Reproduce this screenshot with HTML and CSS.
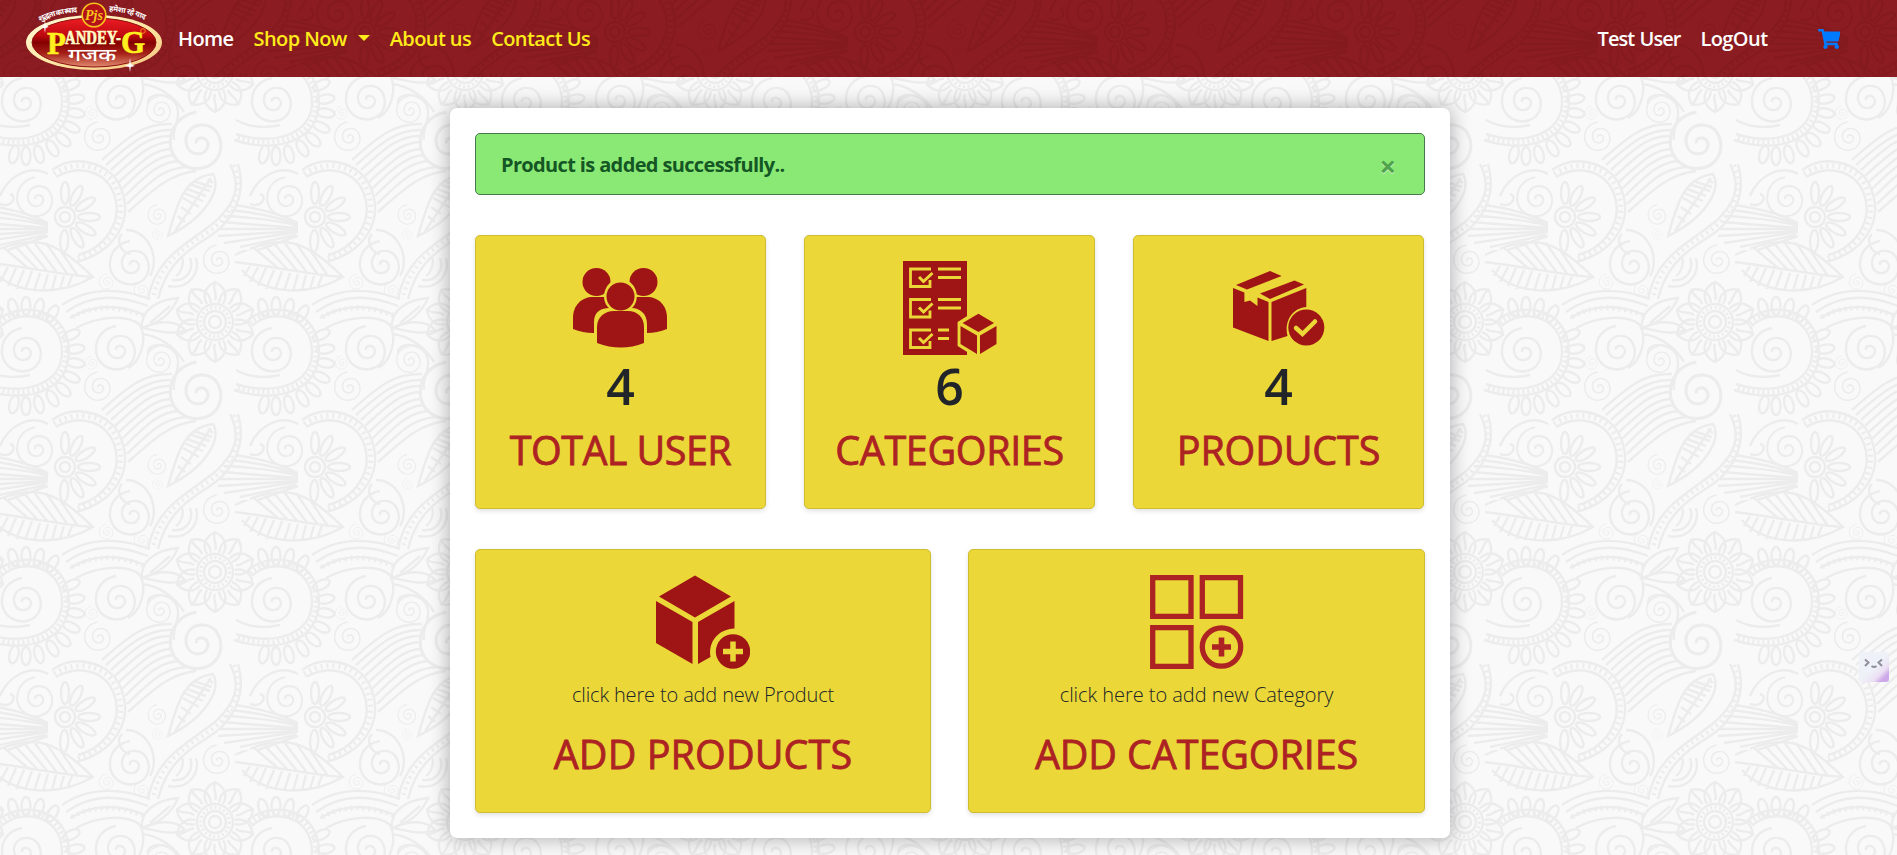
FILE: index.html
```
<!DOCTYPE html>
<html lang="en">
<head>
<meta charset="utf-8">
<title>Admin Dashboard</title>
<link rel="stylesheet" href="styles.css">
</head>
<body>
<svg class="paisley" aria-hidden="true">
  <defs>
    <path id="curl" d="M-2 1C-3-3 3-5 6-1C9 4 4 10-2 9C-10 8-12-2-8-8C-3-15 9-15 14-7C20 3 16 15 6 19C-8 24-20 15-22 3C-23-12-14-21-2-23"/>
    <g id="bloom">
      <g id="petals"><path id="petal" d="M-8-18C-14-28-8-36 0-40C8-36 14-28 8-18M0-40C-3-32 3-28 0-22"/><use href="#petal" transform="rotate(36)"/><use href="#petal" transform="rotate(72)"/><use href="#petal" transform="rotate(108)"/><use href="#petal" transform="rotate(144)"/></g>
      <use href="#petals" transform="rotate(180)"/>
      <circle r="6"/><circle r="11"/><circle r="18"/><circle r="14.500" stroke-width="3" stroke-dasharray="2 2.500"/>
    </g>
    <ellipse id="leaf" cy="-50" rx="4.500" ry="9"/>
    <g id="shapes" fill="none" stroke-width="2.400">
      <use href="#curl" transform="translate(24 101)"/>
      <path d="M2 76C20 58 62 64 62 102C62 134 25 146-14 134M-2 70C22 50 69 58 69 102C69 142 25 154-16 140M-14 120C0 128 16 128 30 125"/>
      <path d="M0 73C21 54 66 61 66 102C66 138 25 150-15 137" stroke-width="5" stroke-dasharray="2 3"/>
      <g transform="translate(26 106)"><use href="#leaf" transform="rotate(-15)"/><use href="#leaf" transform="rotate(0)"/><use href="#leaf" transform="rotate(15)"/><use href="#leaf" transform="rotate(32)"/><use href="#leaf" transform="rotate(65)"/><use href="#leaf" transform="rotate(82)"/><use href="#leaf" transform="rotate(98)"/><use href="#leaf" transform="rotate(115)"/><use href="#leaf" transform="rotate(132)"/><use href="#leaf" transform="rotate(148)"/><use href="#leaf" transform="rotate(165)"/><use href="#leaf" transform="rotate(180)"/><use href="#leaf" transform="rotate(194)"/></g>
      <use href="#curl" transform="translate(118 99)"/>
      <use href="#curl" transform="translate(199 142) scale(1.300)"/>
      <use href="#curl" transform="translate(160 110) scale(.6)"/>
      <path d="M148 104C146 90 178 92 178 112C179 122 172 130 174 140M142 84C160 86 176 98 184 112"/>
      <use href="#curl" transform="translate(99 137) scale(.65)"/>
      <use href="#curl" transform="translate(37 198) scale(.9)"/><path d="M0 196C8 176 30 164 48 174M0 204C12 208 18 196 10 194"/>
      <use href="#curl" transform="translate(132 14)"/><path d="M126-20C150-20 160 10 150 26M122-16C116-10 120 2 130 4"/>
      <use href="#curl" transform="translate(218 10) scale(.65)"/>
      <use href="#curl" transform="translate(158 215) scale(.45)"/><use href="#curl" transform="translate(158 234) scale(.25)"/>
      <use href="#curl" transform="translate(107 32) scale(.35)"/><use href="#curl" transform="translate(142 40) scale(.35)"/><use href="#curl" transform="translate(92 113) scale(.3)"/>
      <path d="M52 170C76 153 110 163 120 186C135 220 115 252 76 262M56 177C80 163 106 172 114 194C124 222 104 248 78 255"/>
      <path d="M54 174C80 157 110 168 117 190C129 220 110 248 77 259" stroke-width="5" stroke-dasharray="2 4"/>
      <g transform="translate(65 217)"><circle r="5"/><circle r="10"/><ellipse cy="-24" rx="4" ry="11"/><ellipse cy="-24" rx="4" ry="11" transform="rotate(28)"/><ellipse cy="-24" rx="4" ry="11" transform="rotate(58)"/><ellipse cy="-24" rx="4" ry="11" transform="rotate(90)"/><ellipse cy="-24" rx="4" ry="11" transform="rotate(120)"/><ellipse cy="-24" rx="4" ry="11" transform="rotate(150)"/><ellipse cy="-24" rx="4" ry="11" transform="rotate(182)"/></g>
      <path d="M-15 205Q25 211 48 223M-19 210Q25 215 48 225M-24 216Q25 219 48 226M-28 222L48 228M-30 229L48 229M-32 236L48 231M-26 243L48 232M-10 247L46 235M8 250L48 236"/>
      <path d="M102 160C130 135 145 123 172 124M106 165C132 142 148 129 172 130M111 170C136 147 150 135 171 136M115 176C140 153 153 142 171 142M119 182C143 160 155 149 172 149M122 189C145 166 158 156 174 155M125 196C150 171 161 162 179 161M127 204C153 179 163 169 186 167M128 212C155 188 170 174 196 171"/>
      <path d="M168 236C177 205 183 178 213 174C222 190 205 218 168 236ZM175 231L211 178M181 207L191 214M183 198L199 207M187 189L206 196M193 181L212 187M178 216L185 222M189 184L210 191M184 193L203 201M208 179L213 183"/>
      <path d="M230 164C242 188 234 204 216 221C190 243 156 255 148 299M238 164C248 198 230 224 207 238C179 255 165 271 158 299"/>
      <path d="M234 165C247 195 225 222 204 235C176 252 158 270 153 299" stroke-width="4" stroke-dasharray="2 4"/>
      <path d="M-15 5C35-18 55-10 93 27C60 46 15 46-8 20M-15 12C35 18 60 25 93 27M0 16L-6 26M8 17L0 32M16 18L8 36M24 20L16 39M32 21L25 40M40 23L34 41M48 24L43 41M56 25L52 40M64 26L60 39M72 26L68 36M4-2L28 18M14-5L38 20M24-7L48 22M34-8L58 24M46-7L68 25M60 0L78 26"/>
      <path d="M176 26C182 22 184 12 182 8M172 30C188 32 194 18 190 8M168 36C190 40 200 22 196 8"/>
      <path d="M62 55C90 36 120 38 150 49M66 62C94 42 122 46 148 56M70 68C95 53 120 55 142 64M76 78C98 66 128 64 140 75C148 90 140 112 128 118"/>
      <path d="M72 67C96 54 120 56 145 66" stroke-width="5" stroke-dasharray="2 4"/>
      <use href="#bloom" transform="translate(215 72)"/>
      <path d="M142 78C140 62 155 50 178 48C172 62 160 73 142 78C157 80 170 86 185 80C176 70 160 70 142 78M150 73L170 56"/>
    </g>
    <g id="repeat"><use href="#shapes"/><use href="#shapes" x="250"/><use href="#shapes" x="-250"/><use href="#shapes" y="250"/><use href="#shapes" y="-250"/></g>
    <pattern id="tile" width="250" height="250" patternUnits="userSpaceOnUse"><use href="#repeat" stroke="#ececec"/></pattern>
    <pattern id="tileRed" width="250" height="250" patternUnits="userSpaceOnUse" patternTransform="translate(50 65)"><use href="#repeat" stroke="#84191e"/></pattern>
  </defs>
  <rect width="100%" height="100%" fill="#f9f9f9"/>
  <rect width="100%" height="100%" fill="url(#tile)"/>
  <rect width="100%" height="77" fill="#8b1c21"/>
  <rect width="100%" height="77" fill="url(#tileRed)"/>
</svg>

<nav class="navbar">
  <a class="brand">
    <svg width="138" height="72" viewBox="0 0 138 72" role="img" aria-label="Pandey-G">
      <defs>
        <linearGradient id="oval" x1="0" y1="0" x2="0" y2="1"><stop offset="0" stop-color="#ee1c24"/><stop offset=".35" stop-color="#c00a10"/><stop offset=".5" stop-color="#850000"/><stop offset=".72" stop-color="#a52018"/><stop offset="1" stop-color="#e08a70"/></linearGradient>
        <linearGradient id="rim" x1="0" y1="0" x2="1" y2="1"><stop offset="0" stop-color="#fff9d8"/><stop offset=".5" stop-color="#ffe9a8"/><stop offset="1" stop-color="#f3c27c"/></linearGradient>
        <path id="arcL" d="M14 22Q32 13 55 12"/><path id="arcR" d="M84 11Q104 12 123 21"/>
      </defs>
      <ellipse cx="69" cy="42.500" rx="68" ry="27.500" fill="url(#rim)"/>
      <ellipse cx="69" cy="42.500" rx="62" ry="24.500" fill="url(#oval)" stroke="#8c1010"/>
      <text class="logo-tag"><textPath href="#arcL" textLength="39">शुद्धता का स्वाद</textPath></text>
      <text class="logo-tag"><textPath href="#arcR" textLength="37">हमेशा रहे याद</textPath></text>
      <circle cx="69" cy="15" r="11.800" fill="#b3121a" stroke="#f8c51c" stroke-width="1.600"/>
      <text x="69" y="20" class="logo-mono">Pjs</text>
      <text class="logo-word"><tspan x="22" y="53.500" class="logo-cap">P</tspan><tspan x="40" y="44" textLength="56" lengthAdjust="spacingAndGlyphs">ANDEY-</tspan><tspan x="96" y="53" class="logo-cap">G</tspan></text>
      <circle cx="118" cy="31" r="2.300" fill="none" stroke="#f08a1c"/>
      <text x="43" y="61" class="logo-hindi" textLength="48" lengthAdjust="spacingAndGlyphs">गजक</text>
      <path d="M20 21l.7 4 3 2-3 1-.7 5-.8-5-3-1 3-2zM105 58l.8 6 4 2-4 1-.8 5-.8-5-4-1 4-2z" fill="#fff"/>
    </svg>
  </a>
  <a class="nav-link nav-light">Home</a>
  <a class="nav-link">Shop Now<span class="caret"></span></a>
  <a class="nav-link">About us</a>
  <a class="nav-link">Contact Us</a>
  <div class="nav-right">
    <a class="nav-link nav-light t-user">Test User</a>
    <a class="nav-link nav-light">LogOut</a>
    <svg class="cart" viewBox="0 0 576 512" width="22.500" height="20" aria-label="Cart"><path fill="#007bff" d="M528.120 301.319l47.273-208C578.806 78.301 567.391 64 551.990 64H159.208l-9.166-44.810C147.758 8.021 137.930 0 126.529 0H24C10.745 0 0 10.745 0 24v16c0 13.255 10.745 24 24 24h69.883l70.248 343.435C147.325 417.100 136 435.222 136 456c0 30.928 25.072 56 56 56s56-25.072 56-56c0-15.674-6.447-29.835-16.824-40h209.647C430.447 426.165 424 440.326 424 456c0 30.928 25.072 56 56 56s56-25.072 56-56c0-22.172-12.888-41.332-31.579-50.405l5.517-24.276c3.413-15.018-8.002-29.319-23.403-29.319H218.117l-6.545-32h293.145c11.206 0 20.920-7.754 23.403-18.681z"/></svg>
  </div>
</nav>

<main class="panel">
  <div class="alert"><strong>Product is added successfully..</strong><span class="close">×</span></div>
  <section class="row row-3">
    <article class="card">
      <svg class="icon" viewBox="0 0 94 94" fill="#9f1515">
        <circle cx="23.500" cy="21" r="14"/><circle cx="70.500" cy="21" r="14"/>
        <path d="M0 68V57C0 44 9 36 20 36H74C85 36 94 44 94 57V68Q84 72 74 72H20Q10 72 0 68Z"/>
        <path class="cut" d="M21 74V61C21 50 29 47 36 47C26 38 32 18 47.500 18S69 38 59 47C66 47 74 52 74 63V74Z"/>
        <circle cx="47.500" cy="35.500" r="14"/>
        <path d="M24 82V66C24 56 32 50 41 50H55C64 50 71 56 71 66V82Q48 91 24 82Z"/>
      </svg>
      <p class="count">4</p><h2 class="t-total">TOTAL USER</h2>
    </article>
    <article class="card">
      <svg class="icon icon-flush" viewBox="0 0 94 94">
        <path fill="#9f1515" d="M0 0H64V94H0Z"/>
        <g fill="none" stroke="#ebd737" stroke-width="2.800">
          <g id="check"><path d="M28 8H7.500V25.500H27V19M35 8H58M35 16.500H58"/><path d="M16 16L20.500 20.500 29.500 12" stroke-width="3"/></g>
          <use href="#check" y="30.500"/>
          <path d="M28 69H7.500V86.500H27V80M35 69H46M35 77.500H46"/><path d="M16 77L20.500 81.500 29.500 73" stroke-width="3"/>
        </g>
        <path class="cut" d="M75.500 48L54.600 61V85L69 94H84L94 84V61Z"/>
        <path fill="#9f1515" d="M75.500 52.700L91 62 75.500 71 59.500 62ZM57.500 65L74 74.500V93L57.500 83ZM93.500 65V83L77 93V74.500Z"/>
      </svg>
      <p class="count">6</p><h2 class="t-cat">CATEGORIES</h2>
    </article>
    <article class="card">
      <svg class="icon" viewBox="0 0 94 94" fill="#9f1515">
        <path d="M5 24L39 10 50.600 15 16 28.500ZM29 32.500L63.500 19.500 73 23.500 39 38ZM2 27L13.400 31.500V41L19 39.500 26.500 45V36.500L37.500 41V80L2 66.500ZM40.500 41L75.300 27V46C61 47 53 61 56.500 75L40.500 80Z"/>
        <circle cx="75.300" cy="66.500" r="18"/><path d="M65 67L71.500 73 84 60.500" fill="none" stroke="#ebd737" stroke-width="4.500" stroke-linecap="round"/>
      </svg>
      <p class="count">4</p><h2 class="t-prod">PRODUCTS</h2>
    </article>
  </section>
  <section class="row row-2">
    <article class="card">
      <svg class="icon" viewBox="0 0 94 94" fill="#9f1515">
        <path d="M39 .5L75 21.500 39 42.500 3 21.500ZM0 26L36.500 47V89L0 68ZM78.500 26V53.500C63 54 52 66 54.500 82L42 89V47Z"/>
        <circle cx="77" cy="76.500" r="17.200"/><path d="M67 76.500H87M77 66.500V86.500" stroke="#ebd737" stroke-width="5.500"/>
      </svg>
      <p class="hint">click here to add new Product</p><h2 class="t-addp">ADD PRODUCTS</h2>
    </article>
    <article class="card">
      <svg class="icon icon-flush" viewBox="0 0 94 94" fill="none" stroke="#ad2323" stroke-width="5.300">
        <path d="M2.700 2.700H41V41.300H2.700ZM52.300 2.700H90.500V41.300H52.300ZM2.700 52.700H41V91.300H2.700Z"/><circle cx="71.500" cy="72" r="19.200"/><path d="M62 72H81M71.500 62.500V81.500" stroke-width="5.600"/>
      </svg>
      <p class="hint t-hint-cat">click here to add new Category</p><h2 class="t-addc">ADD CATEGORIES</h2>
    </article>
  </section>
</main>

<div class="widget"><svg width="30" height="30" viewBox="0 0 30 30" fill="none" stroke="#8f8f9c" stroke-width="2"><path d="M6 7.500L9.500 10.500 6 14M23 7.500L19.500 10.500 23 14M12.500 14Q15 16 17.500 14"/></svg></div>
</body>
</html>
```
FILE: styles.css
```
* { box-sizing: border-box; }
body { margin: 0; height: 855px; overflow: hidden; color: #212529; font-family: "Open Sans", "Noto Sans", sans-serif; font-size: 20px; line-height: 30px; }
.paisley { position: absolute; inset: 0; width: 100%; height: 100%; z-index: -1; }

.navbar { display: flex; align-items: center; height: 77px; padding: 0 57px 0 25px; }
.brand { width: 145px; height: 72px; margin-top: -5px; }
.brand svg { display: block; }
.nav-link { padding: 0 8px; margin-right: 4px; color: #ffeb1a; font-weight: 640; white-space: nowrap; letter-spacing: -.58px; }
.nav-light { color: #fff; }
.t-user { letter-spacing: -.95px; word-spacing: 1px; }
.caret { display: inline-block; margin-left: 11px; vertical-align: 5px; border: 6px solid transparent; border-top-color: currentColor; border-bottom: 0; }
.nav-right { display: flex; align-items: center; margin-left: auto; }
.cart { margin-left: 38px; }
.logo-tag { font: 700 7.5px "Noto Sans", sans-serif; fill: #fff; }
.logo-mono { font: italic 700 14px "Liberation Serif", serif; fill: #f8c51c; text-anchor: middle; }
.logo-word { font: 700 19px "Liberation Serif", serif; fill: #fffdc8; stroke: #fffdc8; stroke-width: .6px; }
.logo-cap { font-size: 31px; fill: #fff01f; stroke: #fff01f; }
.logo-hindi { font: 500 18px "Noto Sans", sans-serif; fill: #fff; }

.panel { width: 1000px; height: 730px; margin: 31px 0 0 450px; padding: 25px; border-radius: 7px; background: #fff; box-shadow: 0 0 20px rgba(50, 50, 60, .4); }
.alert { display: flex; justify-content: space-between; align-items: center; height: 62px; padding: 2px 28px 0 25px; border: 1px solid #47774f; border-radius: 5px; background: #8ae975; color: #155724; }
.alert strong { font-weight: 700; letter-spacing: -.64px; }
.close { padding-top: 2px; font-size: 29px; font-weight: 700; color: #4fa34c; text-shadow: 0 1px 0 #d3f5cb; }
.row { display: grid; margin-top: 40px; }
.row-3 { grid-template-columns: repeat(3, 291px); column-gap: 38px; }
.row-2 { grid-template-columns: 456px 457px; column-gap: 37px; }
.card { display: flex; flex-direction: column; align-items: center; height: 274px; padding-top: 25px; border: 1px solid #cebd30; border-radius: 5px; background: #ebd737; box-shadow: 0 2px 5px rgba(0, 0, 0, .12); }
.row-2 .card { height: 264px; }
.icon { width: 94px; height: 94px; flex: none; margin-left: -1px; }
.icon-flush { margin-left: 1px; }
.cut { fill: #ebd737; }
.count { margin: 1px 0 0; font-size: 50px; line-height: 60px; font-weight: 560; }
h2 { margin: 10px 0 0; font-size: 39.5px; line-height: 48px; font-weight: 400; -webkit-text-stroke: .8px #ad2323; color: #ad2323; white-space: nowrap; }
.t-total { letter-spacing: -.55px; }
.t-cat { letter-spacing: -.35px; }
.t-prod { letter-spacing: -.15px; }
.t-addp { letter-spacing: .1px; }
.t-addc { letter-spacing: -.1px; }
.hint { margin: 11px 0 0; font-weight: 360; letter-spacing: -.15px; white-space: nowrap; }
.t-hint-cat { letter-spacing: -.05px; }
.row-2 h2 { margin-top: 20px; }
.widget { position: absolute; left: 1859px; top: 652px; width: 30px; height: 30px; border-radius: 3px; background: linear-gradient(135deg, #eef2f8 50%, #ece0f4 72%, #cda9ea 85%); }
```
